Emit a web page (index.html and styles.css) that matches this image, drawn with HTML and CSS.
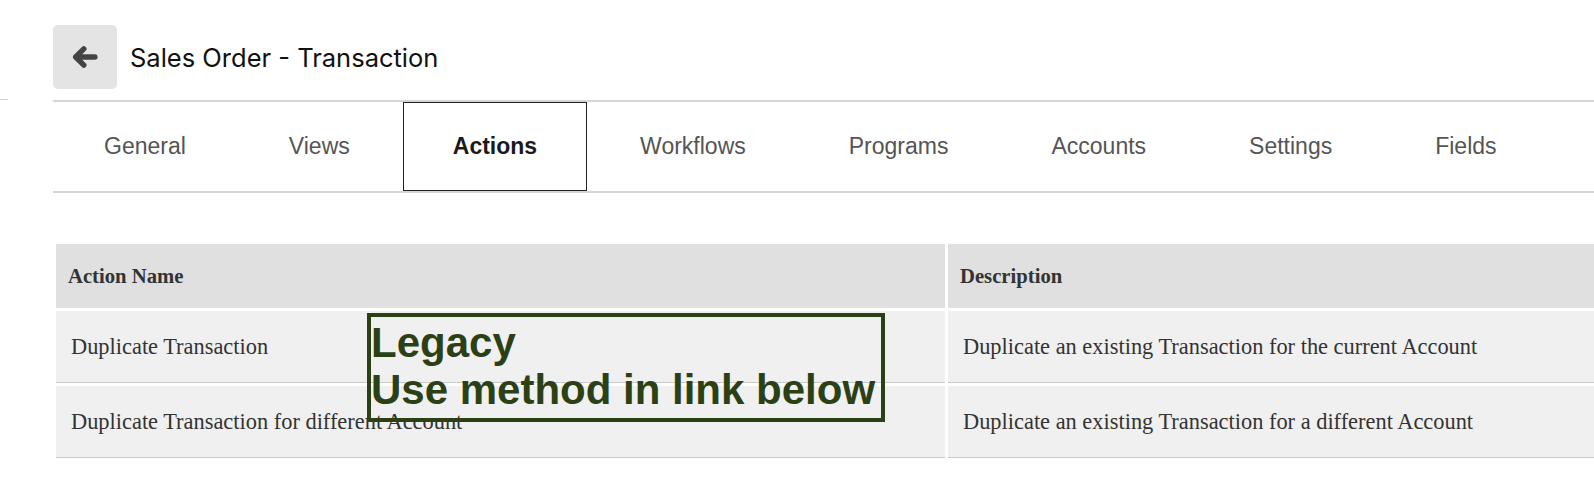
FILE: index.html
```html
<!DOCTYPE html>
<html lang="en">
<head>
    <meta charset="UTF-8">
    <meta name="viewport" content="width=device-width, initial-scale=1.0">
    <title>Sales Order - Transaction</title>
    <link rel="stylesheet" href="styles.css">
</head>
<body>
    <div class="page">
        <!-- left rail -->
        <div class="rail">
            <div class="rail-tick"></div>
        </div>

        <div class="main">
            <div class="header">
                <button class="back" aria-label="Back">
                    <svg width="28" height="28" viewBox="0 0 24 24" fill="none" stroke="#444" stroke-width="4.6" stroke-linecap="round" stroke-linejoin="round">
                        <path d="M20.5 12H4.5"/>
                        <path d="M11 5L4 12L11 19"/>
                    </svg>
                </button>
                <h1 class="title">Sales Order - Transaction</h1>
            </div>

            <!-- Tabs -->
            <div class="tabs">
                <div class="tab">General</div>
                <div class="tab">Views</div>
                <div class="tab active">Actions</div>
                <div class="tab">Workflows</div>
                <div class="tab">Programs</div>
                <div class="tab">Accounts</div>
                <div class="tab">Settings</div>
                <div class="tab">Fields</div>
            </div>

            <!-- Actions table -->
            <div class="table-wrap">
                <table class="actions">
                    <thead>
                        <tr>
                            <th class="col-name">Action Name</th>
                            <th>Description</th>
                        </tr>
                    </thead>
                    <tbody>
                        <tr>
                            <td>Duplicate Transaction</td>
                            <td>Duplicate an existing Transaction for the current Account</td>
                        </tr>
                        <tr>
                            <td>Duplicate Transaction for different Account</td>
                            <td>Duplicate an existing Transaction for a different Account</td>
                        </tr>
                    </tbody>
                </table>

                <div class="legacy-note">Legacy<br>Use method in link below</div>
            </div>
        </div>
    </div>
</body>
</html>
```

FILE: styles.css
```css
/* General Styles */
body {
    margin: 0;
    background: #fff;
    font-family: 'Liberation Sans', Arial, sans-serif;
    overflow: hidden;
}

.page {
    display: flex;
    min-height: 492px;
}

.rail {
    width: 53px;
    flex-shrink: 0;
}

.rail-tick {
    width: 8px;
    height: 1px;
    margin-top: 99px;
    background-color: #d0d0d0;
}

.main {
    flex: 1;
    min-width: 0;
    padding-top: 25px;
}

/* Header */
.header {
    display: flex;
    align-items: center;
    gap: 13px;
    height: 64px;
    margin-bottom: 11px;
}

.back {
    width: 64px;
    height: 64px;
    border: none;
    border-radius: 5px;
    background-color: #e4e4e4;
    display: flex;
    align-items: center;
    justify-content: center;
    padding: 0;
    cursor: pointer;
}

.title {
    margin: 0;
    font-family: 'Inter', 'Liberation Sans', sans-serif;
    font-size: 25.5px;
    font-weight: 400;
    color: #111;
}

/* Tabs */
.tabs {
    display: flex;
    gap: 3px;
    border-top: 2px solid #d6d6d6;
    border-bottom: 2px solid #d6d6d6;
}

.tab {
    height: 87px;
    padding: 0 49px;
    border: 1px solid transparent;
    display: flex;
    align-items: center;
    font-size: 23px;
    color: #555;
    cursor: pointer;
}

.tab:first-child {
    padding-left: 50px;
}

.tab.active {
    border-color: #222;
    color: #1a1a1a;
    font-weight: bold;
}

/* Table */
.table-wrap {
    position: relative;
    margin-top: 48px;
    overflow: hidden;
}

.actions {
    width: 1720px;
    border-spacing: 3px;
    font-family: 'Liberation Serif', 'Times New Roman', serif;
    color: #333;
}

.actions th {
    height: 64px;
    padding: 0 12px;
    background-color: #e0e0e0;
    text-align: left;
    font-size: 20.7px;
    font-weight: bold;
}

.actions th.col-name {
    width: 865px;
}

.actions td {
    height: 71px;
    padding: 0 15px;
    background-color: #f0f0f0;
    border-bottom: 1px solid #cacaca;
    font-size: 22.4px;
}

.legacy-note {
    position: absolute;
    left: 314px;
    top: 72px;
    padding: 2px 6px 5px 0;
    border: 4px solid #2c4016;
    color: #2c4016;
    font-size: 42px;
    font-weight: bold;
    line-height: 47px;
}
```
